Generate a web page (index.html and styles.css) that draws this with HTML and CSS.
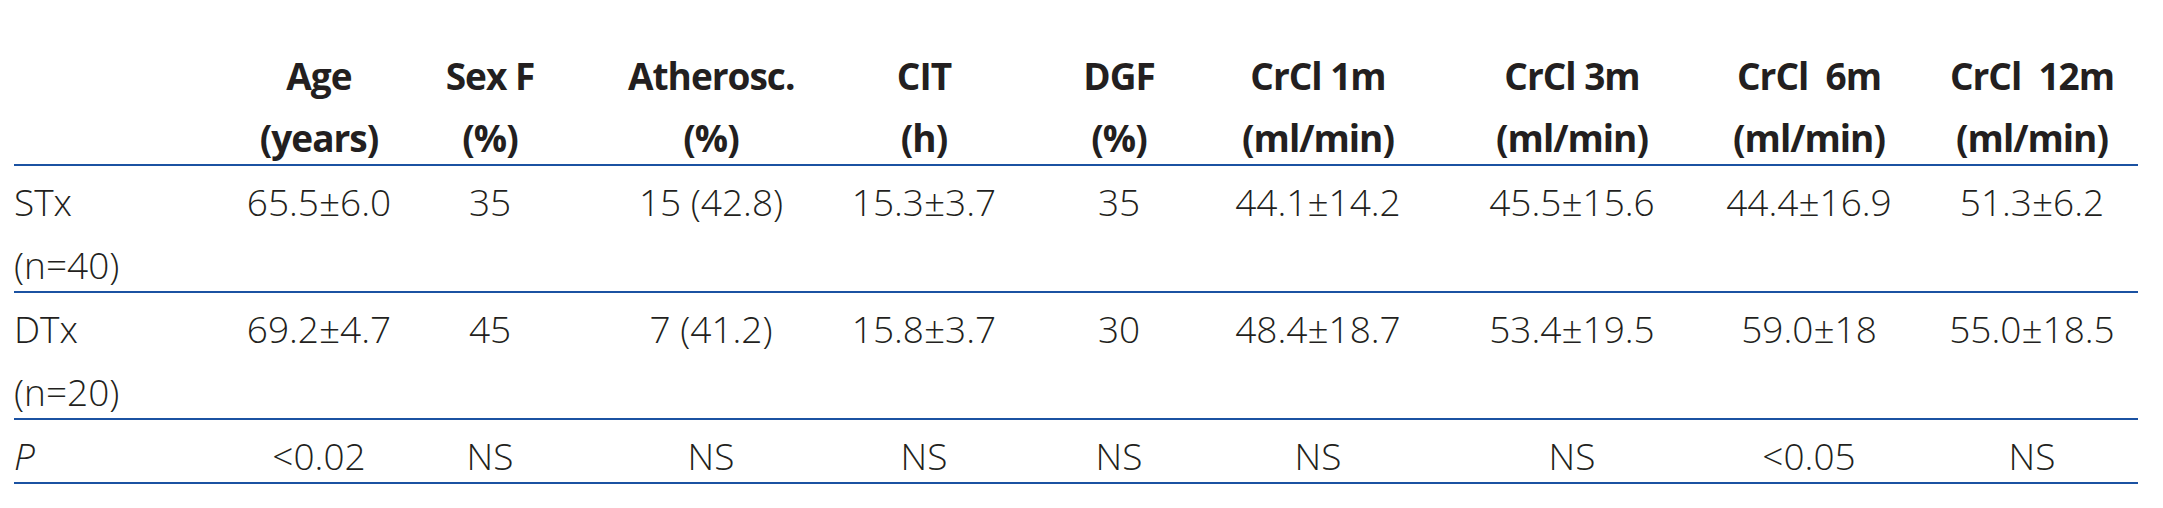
FILE: index.html
```html
<!DOCTYPE html>
<html lang="en">
<head>
    <meta charset="UTF-8">
    <meta name="viewport" content="width=device-width, initial-scale=1.0">
    <title>Graft outcome by transplant type</title>
    <link rel="stylesheet" href="styles.css">
</head>
<body>
    <table class="outcome-table">
        <colgroup>
            <col class="col-label">
            <col class="col-age">
            <col class="col-sex">
            <col class="col-ath">
            <col class="col-cit">
            <col class="col-dgf">
            <col class="col-cr1">
            <col class="col-cr3">
            <col class="col-cr6">
            <col class="col-cr12">
        </colgroup>
        <thead>
            <tr>
                <th></th>
                <th>Age<br>(years)</th>
                <th>Sex F<br>(%)</th>
                <th>Atherosc.<br>(%)</th>
                <th>CIT<br>(h)</th>
                <th>DGF<br>(%)</th>
                <th>CrCl 1m<br>(ml/min)</th>
                <th>CrCl 3m<br>(ml/min)</th>
                <th>CrCl&nbsp; 6m<br>(ml/min)</th>
                <th>CrCl&nbsp; 12m<br>(ml/min)</th>
            </tr>
        </thead>
        <tbody>
            <tr>
                <td>STx<br>(n=40)</td>
                <td>65.5±6.0</td>
                <td>35</td>
                <td>15 (42.8)</td>
                <td>15.3±3.7</td>
                <td>35</td>
                <td>44.1±14.2</td>
                <td>45.5±15.6</td>
                <td>44.4±16.9</td>
                <td>51.3±6.2</td>
            </tr>
            <tr>
                <td>DTx<br>(n=20)</td>
                <td>69.2±4.7</td>
                <td>45</td>
                <td>7 (41.2)</td>
                <td>15.8±3.7</td>
                <td>30</td>
                <td>48.4±18.7</td>
                <td>53.4±19.5</td>
                <td>59.0±18</td>
                <td>55.0±18.5</td>
            </tr>
            <tr>
                <td><i>P</i></td>
                <td>&lt;0.02</td>
                <td>NS</td>
                <td>NS</td>
                <td>NS</td>
                <td>NS</td>
                <td>NS</td>
                <td>NS</td>
                <td>&lt;0.05</td>
                <td>NS</td>
            </tr>
        </tbody>
    </table>
</body>
</html>
```
FILE: styles.css
```css
body {
    margin: 0;
    background: #fff;
    color: #231f20;
    font-family: "Open Sans", "Liberation Sans", Arial, sans-serif;
}

.outcome-table {
    margin: 41px 0 0 14px;
    width: 2124px;
    border-collapse: collapse;
    table-layout: fixed;
    font-size: 37px;
}

.col-label { width: 224px; }
.col-age   { width: 162px; }
.col-sex   { width: 228px; }
.col-ath   { width: 166px; }
.col-cit   { width: 260px; }
.col-dgf   { width: 130px; }
.col-cr1   { width: 268px; }
.col-cr3   { width: 240px; }
.col-cr6   { width: 234px; }
.col-cr12  { width: 212px; }

.outcome-table th,
.outcome-table td {
    padding: 4px 0 0;
    line-height: 62px;
    text-align: center;
    vertical-align: top;
    white-space: nowrap;
}

/* pull the rule up closer to the last baseline */
.outcome-table th::after,
.outcome-table td::after {
    content: "";
    display: block;
    margin-top: -5px;
}

.outcome-table th {
    font-weight: 700;
    font-stretch: 92%;
    letter-spacing: -1px;
}

.outcome-table td {
    line-height: 63px;
    font-weight: 300;
    font-stretch: 93%;
}

.outcome-table td:first-child {
    text-align: left;
}

/* Sex F column sits left of its cell centre */
.outcome-table th:nth-child(3),
.outcome-table td:nth-child(3) {
    padding-right: 48px;
}

.outcome-table thead tr,
.outcome-table tbody tr {
    border-bottom: 2px solid #1b52a2;
}
```
